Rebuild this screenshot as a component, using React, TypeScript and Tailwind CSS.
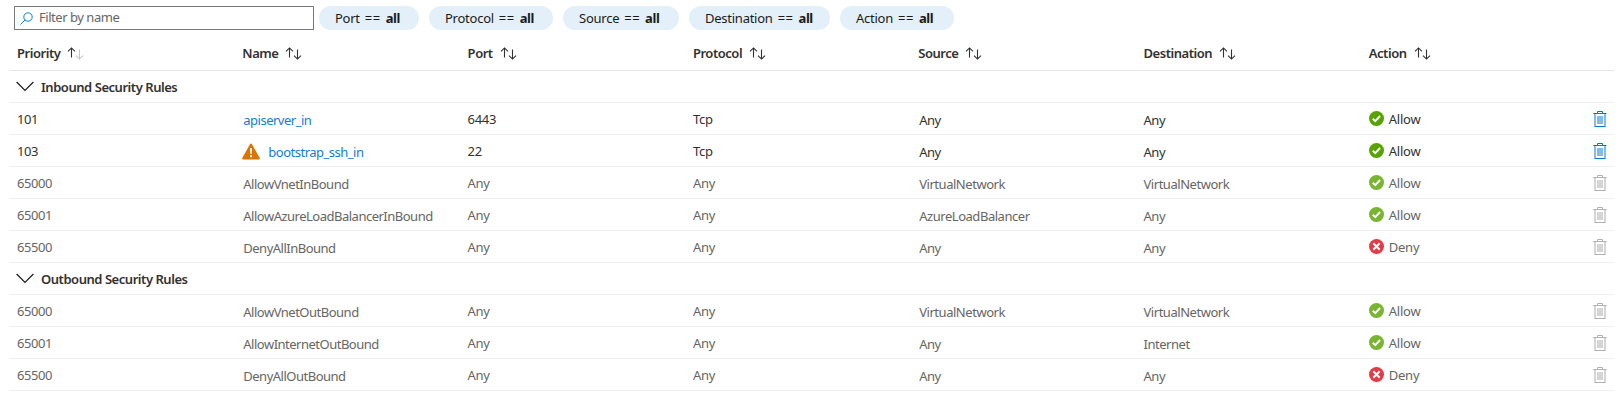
import React from "react";

type Rule = {
  priority: string;
  name: string;
  port: string;
  protocol: string;
  source: string;
  destination: string;
  action: "Allow" | "Deny";
  custom?: boolean;
  warn?: boolean;
};

const inbound: Rule[] = [
  { priority: "101", name: "apiserver_in", port: "6443", protocol: "Tcp", source: "Any", destination: "Any", action: "Allow", custom: true },
  { priority: "103", name: "bootstrap_ssh_in", port: "22", protocol: "Tcp", source: "Any", destination: "Any", action: "Allow", custom: true, warn: true },
  { priority: "65000", name: "AllowVnetInBound", port: "Any", protocol: "Any", source: "VirtualNetwork", destination: "VirtualNetwork", action: "Allow" },
  { priority: "65001", name: "AllowAzureLoadBalancerInBound", port: "Any", protocol: "Any", source: "AzureLoadBalancer", destination: "Any", action: "Allow" },
  { priority: "65500", name: "DenyAllInBound", port: "Any", protocol: "Any", source: "Any", destination: "Any", action: "Deny" },
];

const outbound: Rule[] = [
  { priority: "65000", name: "AllowVnetOutBound", port: "Any", protocol: "Any", source: "VirtualNetwork", destination: "VirtualNetwork", action: "Allow" },
  { priority: "65001", name: "AllowInternetOutBound", port: "Any", protocol: "Any", source: "Any", destination: "Internet", action: "Allow" },
  { priority: "65500", name: "DenyAllOutBound", port: "Any", protocol: "Any", source: "Any", destination: "Any", action: "Deny" },
];

const filters = [
  { label: "Port", width: "w-[100px]" },
  { label: "Protocol", width: "w-[124px]" },
  { label: "Source", width: "w-[116px]" },
  { label: "Destination", width: "w-[141px]" },
  { label: "Action", width: "w-[114px]" },
];

const COLS = "grid grid-cols-[225.3px_225.3px_225.3px_225.3px_225.3px_225.3px_1fr]";

function SortIcon({ dim }: { dim?: boolean }) {
  return (
    <svg width="17" height="13" viewBox="0 0 17 13" fill="none" strokeWidth="1.1" className="mt-0.5 shrink-0">
      <path d="M4.500 10.500V1.200M1 4.300 4.500.9 8 4.300" stroke="#323130" />
      <path d="M12.500 2.500v9.400M9 8.700l3.500 3.400 3.500-3.400" stroke={dim ? "#c8c6c4" : "#323130"} />
    </svg>
  );
}

function Trash({ on }: { on?: boolean }) {
  const line = on ? "#0078d4" : "#b3b0ad";
  const body = on ? "#83bbec" : "#d5d5d5";
  return (
    <svg width="14" height="16" viewBox="0 0 14 16" fill="none" className="shrink-0">
      <path d="M4.5 2V.5h5V2" stroke={line} />
      <path d="M2 3v12M12 3v12" stroke={body} strokeWidth="2" />
      <path d="M.3 2.5h13.2M1.5 15.5h11" stroke={line} />
      <path d="M4 5h6v8H4z" fill={body} />
    </svg>
  );
}

function Status({ action, custom }: { action: string; custom?: boolean }) {
  return (
    <svg width="15" height="15" viewBox="0 0 15 15" fill="none" className="-mt-px shrink-0">
      <circle cx="7.5" cy="7.5" r="7.5" fill={action === "Deny" ? "#e63946" : custom ? "#57a300" : "#79b530"} />
      {action === "Deny" ? (
        <path d="m4.3 4.3 6.4 6.4m0-6.4-6.4 6.4" stroke="#fff" strokeWidth="2.1" />
      ) : (
        <path d="m3.8 7.8 2.5 2.4 4.8-5.2" stroke="#fff" strokeWidth="1.9" />
      )}
    </svg>
  );
}

function Row({ r }: { r: Rule }) {
  return (
    <div className={`${COLS} h-8 items-center border-b border-[#f0f0f0] pl-2 ${r.custom ? "text-[#323130]" : "text-[#666564]"}`}>
      <span>{r.priority}</span>
      <span className="flex items-center pt-0.5 tracking-[-0.5px]">
        {r.warn && (
          <svg width="18" height="17" viewBox="0 0 18 17" className="mr-[7px] -mt-px shrink-0">
            <path d="M9 .6a1 1 0 0 1 .9.5l7.800 14a.9.9 0 0 1-.8 1.400H1.100a.9.9 0 0 1-.8-1.400l7.800-14A1 1 0 0 1 9 .6z" fill="#db7500" />
            <path d="M8 5h2l-.3 6H8.300zM8 12.200h2v2H8z" fill="#fff" />
          </svg>
        )}
        <span className={r.custom ? "pl-px text-[#0f7ed6]" : "pl-px"}>{r.name}</span>
      </span>
      <span className="tracking-[-0.3px]">{r.port}</span>
      <span className="tracking-[-0.25px]">{r.protocol}</span>
      <span className="pl-px pt-0.5">{r.source}</span>
      <span className="pt-0.5">{r.destination}</span>
      <span className="flex items-center justify-between pr-[7px]">
        <span className="flex items-center gap-[5px] tracking-[-0.25px]">
          <Status action={r.action} custom={r.custom} />
          {r.action}
        </span>
        <Trash on={r.custom} />
      </span>
    </div>
  );
}

function Group({ title, rules }: { title: string; rules: Rule[] }) {
  return (
    <>
      <div className="flex h-8 items-center gap-[7px] border-b border-[#f0f0f0] pl-[7px] text-[#323130]">
        <svg width="18" height="11" viewBox="0 0 18 11" fill="none">
          <path d="m.6 1 8.400 8.400L17.400 1" stroke="#222" strokeWidth="1.3" />
        </svg>
        <span className="font-semibold">{title}</span>
      </div>
      {rules.map((r) => (
        <Row key={r.name} r={r} />
      ))}
    </>
  );
}

export default function App() {
  return (
    <div className="h-[406px] bg-white pl-[9px] pr-2 pt-1.5 font-['Noto_Sans',sans-serif] text-[13px] leading-4 tracking-[-0.46px]">
      <div className="flex h-6 items-stretch pl-[5px] text-[#1b1a19]">
        <div className="mr-[5px] flex w-[300px] items-center gap-1.5 border border-[#7a7876] px-[5px] pb-0.5 text-[#666564]">
          <svg width="13" height="13" viewBox="0 0 13 13" fill="none" stroke="#0f7ed6" className="mt-0.5">
            <circle cx="8" cy="5" r="4.200" />
            <path d="m5 8-4.500 4.500" />
          </svg>
          Filter by name
        </div>
        <div className="flex gap-2.5">
          {filters.map((f) => (
            <div key={f.label} className={`flex items-center gap-[5px] rounded-full bg-[#e3f0fa] pl-4 ${f.width}`}>
              <span className="tracking-[-0.25px]">{f.label}</span>
              <span className="tracking-[0.5px]">==</span>
              <b className="tracking-[-0.4px]">all</b>
            </div>
          ))}
        </div>
      </div>
      <div className={`${COLS} h-[41px] items-center border-b border-[#e6e6e6] pl-2 pt-[5px] font-semibold text-[#323130]`}>
        {["Priority", "Name", "Port", "Protocol", "Source", "Destination", "Action"].map((h) => (
          <span key={h} className="flex items-center gap-[7px]">
            {h}
            <SortIcon dim={h === "Priority"} />
          </span>
        ))}
      </div>
      <Group title="Inbound Security Rules" rules={inbound} />
      <Group title="Outbound Security Rules" rules={outbound} />
    </div>
  );
}
